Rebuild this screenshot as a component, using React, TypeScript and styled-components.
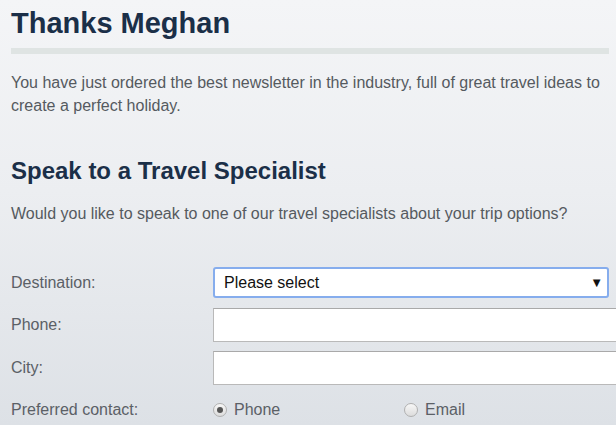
import React from "react";
import styled, { createGlobalStyle } from "styled-components";

const Global = createGlobalStyle`
  html, body { margin: 0; padding: 0; overflow: hidden; }
  body {
    width: 616px;
    height: 425px;
    background: linear-gradient(180deg, #f4f5f7 0%, #eceef1 45%, #dde1e6 100%);
    font-family: "Liberation Sans", Arial, sans-serif;
  }
`;

const Page = styled.div`
  padding: 6px 0 0 11px;
  width: 605px;
  box-sizing: border-box;
`;

const Title = styled.h1`
  margin: 0;
  font-size: 29px;
  line-height: 34px;
  font-weight: 700;
  color: #1b2f48;
  width: 598px;
`;

const Divider = styled.div`
  margin-top: 8px;
  width: 598px;
  height: 6px;
  background: #dfe4e3;
`;

const Lead = styled.p`
  margin: 17px 0 0;
  width: 598px;
  font-size: 16px;
  line-height: 23px;
  color: #555a5f;
`;

const SubTitle = styled.h2`
  margin: 40px 0 0;
  font-size: 24px;
  line-height: 28px;
  font-weight: 700;
  color: #1b2f48;
`;

const Question = styled.p`
  margin: 17px 0 0;
  font-size: 16px;
  line-height: 23px;
  color: #555a5f;
`;

const Form = styled.div`
  margin-top: 42px;
  display: grid;
  grid-template-columns: 202px 410px;
  row-gap: 9px;
  align-items: center;
`;

const Label = styled.label`
  font-size: 16px;
  color: #5b6066;
  line-height: 20px;
`;

const Select = styled.div`
  box-sizing: border-box;
  width: 396px;
  height: 31px;
  margin-bottom: 1px;
  border: 2px solid #86aded;
  border-radius: 3px;
  background: #fff;
  display: flex;
  align-items: center;
  justify-content: space-between;
  padding: 0 4px 0 9px;
  font-size: 16px;
  color: #111;
`;

const Arrow = styled.span`
  font-size: 13px;
  color: #111;
`;

const Input = styled.input`
  box-sizing: border-box;
  width: 410px;
  height: 34px;
  border: 1px solid #b9b9b9;
  border-top-color: #a9a9a9;
  background: #fff;
  margin: 0;
  padding: 0 8px;
  font-family: inherit;
  font-size: 16px;
  outline: none;
`;

const Radios = styled.div`
  display: grid;
  grid-template-columns: 191px 191px;
  margin-top: 6px;
`;

const RadioOption = styled.span`
  display: flex;
  align-items: center;
  gap: 7px;
  font-size: 16px;
  color: #5b6066;
`;

const RadioDot = styled.span<{ $checked?: boolean }>`
  box-sizing: border-box;
  width: 14px;
  height: 14px;
  border-radius: 50%;
  border: 1px solid #b0b0b0;
  background: linear-gradient(180deg, #f7f7f7, #dcdcdc);
  display: flex;
  align-items: center;
  justify-content: center;
  &::after {
    content: "";
    display: ${(p) => (p.$checked ? "block" : "none")};
    width: 6px;
    height: 6px;
    border-radius: 50%;
    background: #555;
  }
`;

export default function App() {
  return (
    <>
      <Global />
      <Page>
        <Title>Thanks Meghan</Title>
        <Divider />
        <Lead>
          You have just ordered the best newsletter in the industry, full of great travel ideas to
          create a perfect holiday.
        </Lead>
        <SubTitle>Speak to a Travel Specialist</SubTitle>
        <Question>Would you like to speak to one of our travel specialists about your trip options?</Question>
        <Form>
          <Label>Destination:</Label>
          <Select>
            <span>Please select</span>
            <Arrow>▼</Arrow>
          </Select>
          <Label>Phone:</Label>
          <Input type="text" />
          <Label>City:</Label>
          <Input type="text" />
          <Label style={{ marginTop: 6 }}>Preferred contact:</Label>
          <Radios>
            <RadioOption>
              <RadioDot $checked />
              Phone
            </RadioOption>
            <RadioOption>
              <RadioDot />
              Email
            </RadioOption>
          </Radios>
        </Form>
      </Page>
    </>
  );
}
